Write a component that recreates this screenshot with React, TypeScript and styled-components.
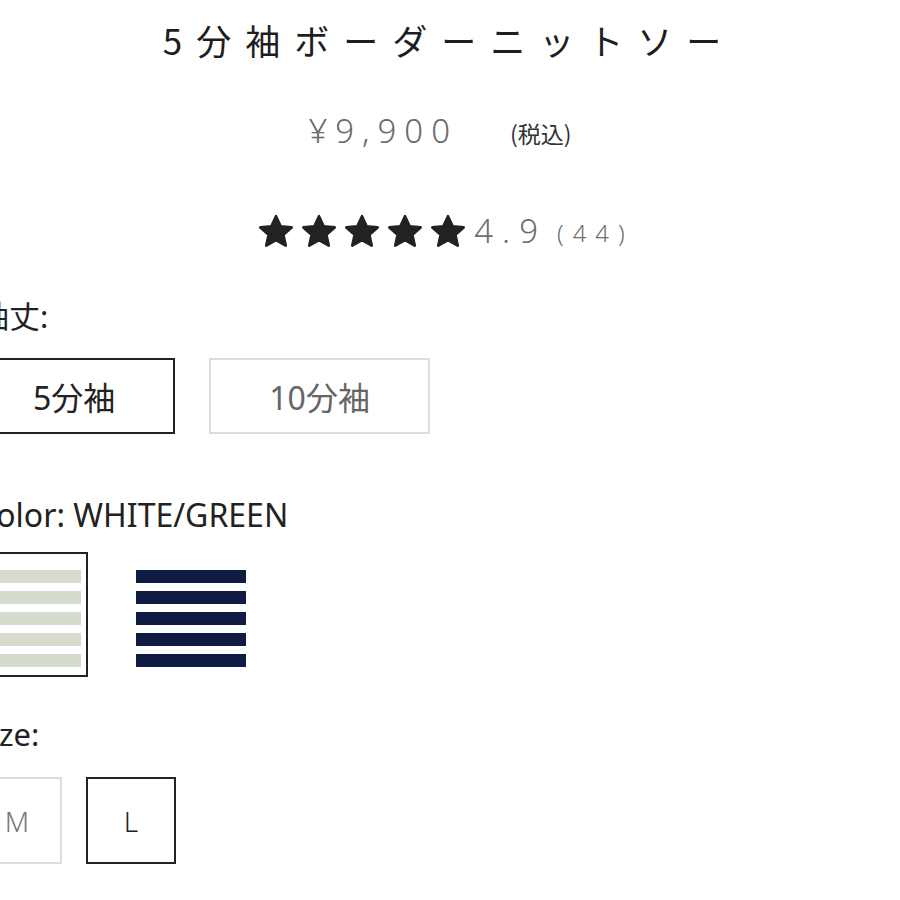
import React from "react";
import styled, { createGlobalStyle } from "styled-components";

const Global = createGlobalStyle`
  html, body { margin: 0; padding: 0; background: #fff; }
  body {
    font-family: "Noto Sans CJK JP", "Noto Sans", sans-serif;
    color: #222;
    overflow: hidden;
  }
`;

const Page = styled.div`
  width: 900px;
  height: 900px;
  overflow: hidden;
  padding-top: 16px;
  box-sizing: border-box;
`;

const Title = styled.h1`
  margin: 0;
  text-align: center;
  font-size: 35px;
  font-weight: 400;
  line-height: 48px;
  letter-spacing: 14px;
  padding-right: 2px;
  color: #1e1e1e;
`;

const PriceRow = styled.div`
  margin-top: 43px;
  display: flex;
  justify-content: center;
  align-items: baseline;
  height: 48px;
  line-height: 48px;
  padding-right: 20px;
`;

const Price = styled.span`
  font-size: 33px;
  letter-spacing: 8px;
  color: #6a6a6a;
  font-family: "Noto Sans", sans-serif;
  font-weight: 300;
`;

const Tax = styled.span`
  margin-left: 52px;
  font-size: 23px;
  color: #333;
`;

const RatingRow = styled.div`
  margin-top: 56px;
  height: 40px;
  display: flex;
  justify-content: center;
  align-items: center;
  padding-right: 8px;
`;

const Stars = styled.div`
  display: flex;
  gap: 7px;
  margin-right: 8px;
`;

const Score = styled.span`
  font-family: "Noto Sans", sans-serif;
  font-weight: 300;
  font-size: 33px;
  letter-spacing: 9px;
  color: #6e6e6e;
  line-height: 40px;
`;

const Count = styled.span`
  font-family: "Noto Sans", sans-serif;
  font-weight: 300;
  font-size: 24px;
  letter-spacing: 9px;
  color: #6e6e6e;
  margin-left: 10px;
  line-height: 40px;
  padding-top: 4px;
`;

const Options = styled.div`
  margin-left: -32px;
`;

const Label = styled.div<{ $top: number; $indent?: number }>`
  margin-top: ${(p) => p.$top}px;
  margin-left: ${(p) => p.$indent ?? 0}px;
  font-size: 31px;
  line-height: 40px;
  color: #222;
  font-family: "Noto Sans", "Noto Sans CJK JP", sans-serif;
`;

const ColorLabel = styled(Label)`
  font-size: 32px;
`;

const ButtonRow = styled.div<{ $gap: number; $top: number; $indent?: number }>`
  display: flex;
  gap: ${(p) => p.$gap}px;
  margin-top: ${(p) => p.$top}px;
  margin-left: ${(p) => p.$indent ?? 0}px;
`;

const OptionButton = styled.div<{ $selected?: boolean }>`
  box-sizing: border-box;
  height: 76px;
  padding: 0 58px;
  display: flex;
  align-items: center;
  justify-content: center;
  border: 2px solid ${(p) => (p.$selected ? "#222" : "#dcdcdc")};
  color: ${(p) => (p.$selected ? "#222" : "#666")};
  font-size: 32px;
  font-family: "Noto Sans", "Noto Sans CJK JP", sans-serif;
`;

const Swatch = styled.div<{ $selected?: boolean }>`
  box-sizing: border-box;
  width: 124px;
  height: 125px;
  border: 2px solid ${(p) => (p.$selected ? "#222" : "transparent")};
  padding: 16px 5px 0 5px;
  display: flex;
  flex-direction: column;
  gap: 8px;
`;

const Stripe = styled.div<{ $color: string }>`
  height: 13px;
  background: ${(p) => p.$color};
`;

const SizeBox = styled.div<{ $selected?: boolean }>`
  box-sizing: border-box;
  width: 90px;
  height: 87px;
  display: flex;
  align-items: center;
  justify-content: center;
  border: 2px solid ${(p) => (p.$selected ? "#222" : "#dcdcdc")};
  color: ${(p) => (p.$selected ? "#222" : "#777")};
  font-size: 28px;
  font-family: "Noto Sans", sans-serif;
  font-weight: 300;
`;

const Star = () => (
  <svg width="36" height="34" viewBox="0 0 34 32">
    <polygon
      points="17,2 21.4,11.6 31.8,12.6 24,19.6 26.2,29.8 17,24.6 7.8,29.8 10,19.6 2.2,12.6 12.6,11.6"
      fill="#222"
      stroke="#222"
      strokeWidth="2.5"
      strokeLinejoin="round"
    />
  </svg>
);

const StripedSwatch = ({ color, selected }: { color: string; selected?: boolean }) => (
  <Swatch $selected={selected}>
    {[0, 1, 2, 3, 4].map((i) => (
      <Stripe key={i} $color={color} />
    ))}
  </Swatch>
);

export default function App() {
  return (
    <Page>
      <Global />
      <Title>5分袖ボーダーニットソー</Title>
      <PriceRow>
        <Price>¥9,900</Price>
        <Tax>(税込)</Tax>
      </PriceRow>
      <RatingRow>
        <Stars>
          {[0, 1, 2, 3, 4].map((i) => (
            <Star key={i} />
          ))}
        </Stars>
        <Score>4.9</Score>
        <Count>(44)</Count>
      </RatingRow>
      <Options>
        <Label $top={45} $indent={10}>袖丈:</Label>
        <ButtonRow $gap={34} $top={22} $indent={5}>
          <OptionButton $selected>5分袖</OptionButton>
          <OptionButton>10分袖</OptionButton>
        </ButtonRow>
        <ColorLabel $top={61} $indent={8}>Color: WHITE/GREEN</ColorLabel>
        <ButtonRow $gap={41} $top={17} $indent={-4}>
          <StripedSwatch color="#d5dbcf" selected />
          <StripedSwatch color="#0f1b42" />
        </ButtonRow>
        <Label $top={37} $indent={6}>Size:</Label>
        <ButtonRow $gap={24} $top={23} $indent={4}>
          <SizeBox>M</SizeBox>
          <SizeBox $selected>L</SizeBox>
        </ButtonRow>
      </Options>
    </Page>
  );
}
